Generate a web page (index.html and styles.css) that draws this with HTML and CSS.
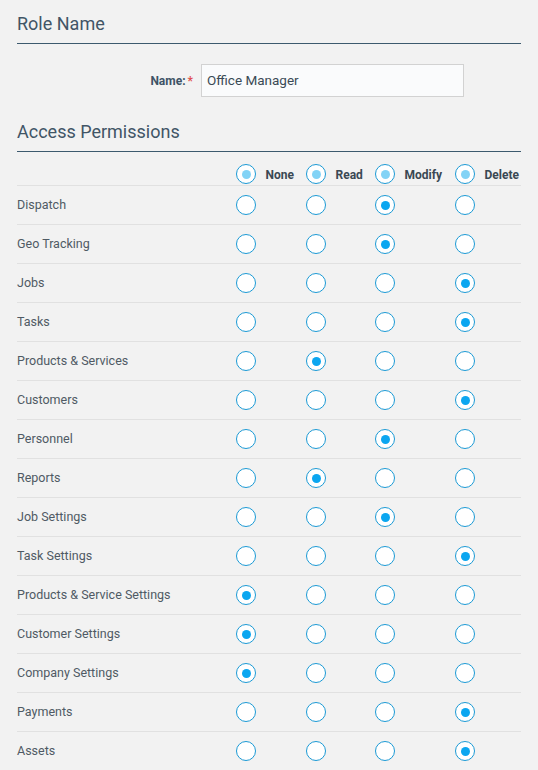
FILE: index.html
```html
<!DOCTYPE html>
<html>
<head>
<meta charset="utf-8">
<link rel="stylesheet" href="styles.css">
</head>
<body>
<div class="page">
  <h2 class="section-title">Role Name</h2>
  <div class="name-row">
    <label class="name-label">Name:<span class="req">*</span></label>
    <div class="name-input">Office Manager</div>
  </div>
  <h2 class="section-title second">Access Permissions</h2>
  <div class="perm-table" id="perm"></div>
</div>
<script>
(function(){
  var rows = [
    ["Dispatch",2],["Geo Tracking",2],["Jobs",3],["Tasks",3],
    ["Products & Services",1],["Customers",3],["Personnel",2],["Reports",1],
    ["Job Settings",2],["Task Settings",3],["Products & Service Settings",0],
    ["Customer Settings",0],["Company Settings",0],["Payments",3],["Assets",3]
  ];
  var heads = ["None","Read","Modify","Delete"];
  var t = document.getElementById('perm');
  var h = '<div class="row head"><div class="cell label"></div>';
  heads.forEach(function(x){ h += '<div class="cell"><span class="radio head-radio"></span><span class="head-text">'+x+'</span></div>'; });
  h += '</div>';
  rows.forEach(function(r){
    h += '<div class="row"><div class="cell label">'+r[0].replace('&','&amp;')+'</div>';
    for (var i=0;i<4;i++){
      h += '<div class="cell"><span class="radio'+(i===r[1]?' checked':'')+'"></span></div>';
    }
    h += '</div>';
  });
  t.innerHTML = h;
})();
</script>
</body>
</html>
```
FILE: styles.css
```css
html, body {
  margin: 0;
  padding: 0;
  background: #f2f2f2;
}
body {
  font-family: Roboto, "Liberation Sans", sans-serif;
  color: #4f5b65;
}
.page {
  padding: 12px 17px 0 17px;
}
.section-title {
  margin: 0;
  font-size: 18px;
  font-weight: 400;
  color: #415566;
  line-height: 24px;
  padding-bottom: 7px;
  border-bottom: 1px solid #3d5a6e;
}
.name-row {
  display: flex;
  align-items: center;
  margin: 20px 0 23px 0;
}
.name-label {
  width: 184px;
  text-align: right;
  font-size: 12px;
  font-weight: 700;
  color: #3e5366;
  padding-right: 8px;
  box-sizing: border-box;
}
.req {
  color: #e0504f;
  margin-left: 2px;
}
.name-input {
  width: 263px;
  height: 33px;
  box-sizing: border-box;
  border: 1px solid #d2d2d2;
  background: #fafbfc;
  font-size: 13.5px;
  color: #3b4a55;
  padding: 0 5px;
  line-height: 31px;
}
.perm-table {
  margin-top: 11px;
}
.row {
  display: grid;
  grid-template-columns: 1fr 70px 69px 80px 66px;
  align-items: center;
  height: 38px;
  border-bottom: 1px solid #e1e1e1;
}
.row.head {
  height: 21px;
  padding-top: 1px;
  align-items: start;
}
.cell {
  display: flex;
  align-items: center;
}
.cell.label {
  font-size: 12.5px;
  color: #4f5a64;
  padding-bottom: 2px;
}
.radio {
  width: 20px;
  height: 20px;
  box-sizing: border-box;
  border: 1.5px solid #1b9ad5;
  border-radius: 50%;
  background: #ffffff;
  display: flex;
  align-items: center;
  justify-content: center;
  flex: none;
}
.radio.checked::after,
.radio.head-radio::after {
  content: "";
  width: 9px;
  height: 9px;
  border-radius: 50%;
  background: #0ba6f0;
}
.radio.head-radio::after {
  background: #82d3f6;
}
.head-text {
  margin-left: 9.5px;
  font-size: 12px;
  font-weight: 700;
  color: #3a4853;
  padding-top: 1px;
}
```
